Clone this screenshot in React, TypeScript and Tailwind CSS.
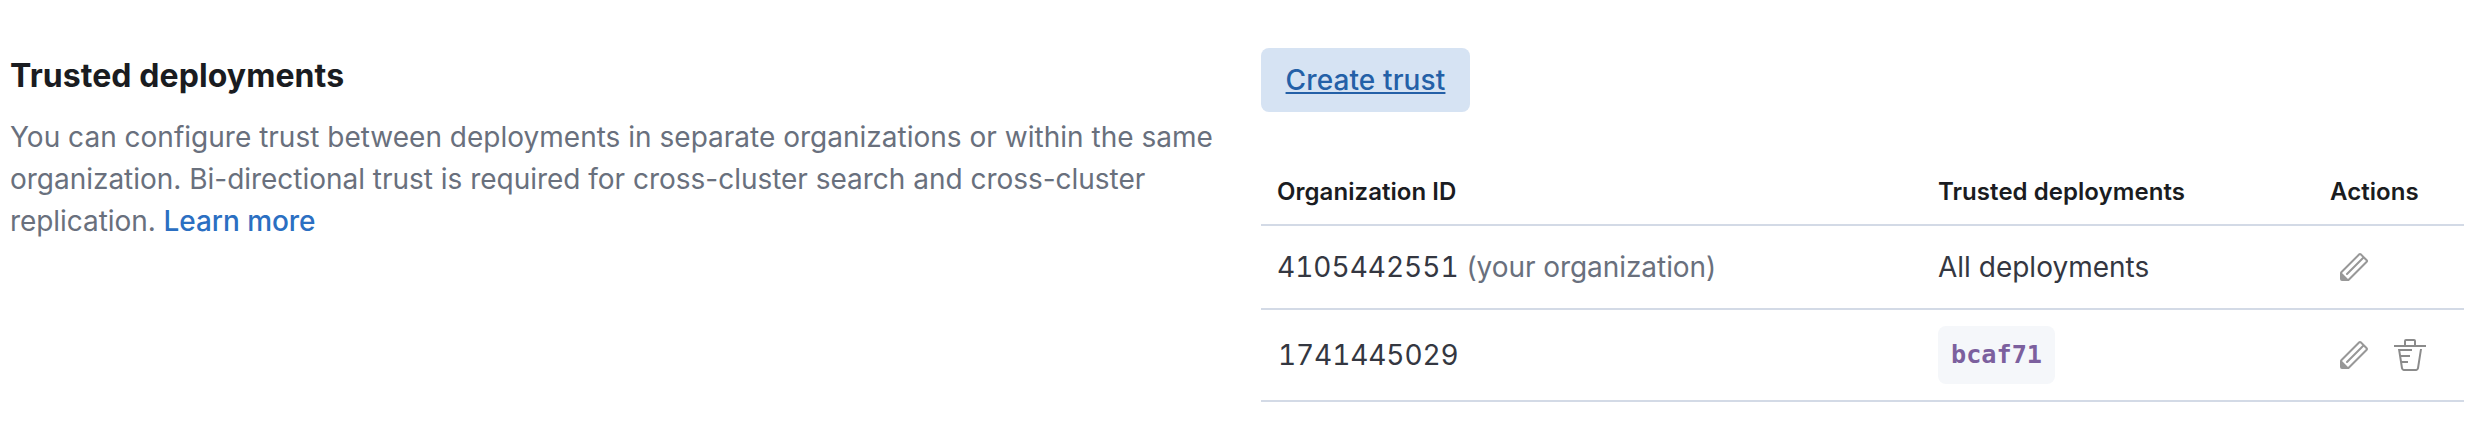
import React from "react";

function PencilIcon() {
  return (
    <svg width="32" height="32" viewBox="0 0 16 16" fill="#989898" aria-hidden="true">
      <path d="M12.148 3.148 11 2l-9 9v3h3l9-9-1.144-1.144-8.002 7.998a.502.502 0 0 1-.708 0 .502.502 0 0 1 0-.708l8.002-7.998ZM11 1c.256 0 .512.098.707.293l3 3a.999.999 0 0 1 0 1.414l-9 9A.997.997 0 0 1 5 15H2a1 1 0 0 1-1-1v-3c0-.265.105-.52.293-.707l9-9A.997.997 0 0 1 11 1ZM5 14H2v-3l3 3Z" />
    </svg>
  );
}

function TrashIcon() {
  return (
    <svg width="32" height="32" viewBox="0 0 16 16" fill="#8b8b8b" aria-hidden="true">
      <path d="M11 3h5v1H0V3h5V1a1 1 0 0 1 1-1h4a1 1 0 0 1 1 1v2Zm-7.056 8H7v1H4.1l.392 2.519c.042.269.254.458.493.458h6.03c.239 0 .451-.189.493-.458l1.498-9.576H14l-1.504 9.73c-.116.747-.74 1.304-1.481 1.304h-6.03c-.741 0-1.365-.557-1.481-1.304l-1.511-9.73H9V5.95H3.157L3.476 8H8v1H3.632l.312 2ZM6 3h4V1H6v2Z" />
    </svg>
  );
}

const row = "grid grid-cols-[661px_392px_1fr] items-center border-b-2 border-[#d3dae6] pl-4";

export default function App() {
  return (
    <main className="flex h-[444px] w-[2486px] items-start overflow-hidden bg-white font-['Inter',sans-serif] text-[28px] leading-[42px] text-[#343741]">
      <section className="w-[1261px] pt-[52px] pl-[10px]">
        <h2 className="text-[32px] leading-[48px] font-bold tracking-[0.08px] whitespace-nowrap text-[#1a1c21]">Trusted deployments</h2>
        <p className="pt-4 whitespace-nowrap text-[#69707d]">
          <span className="tracking-[0.01px]">You can configure trust between deployments in separate organizations or within the same</span>
          <br />
          <span className="tracking-[-0.02px]">organization. Bi-directional trust is required for cross-cluster search and cross-cluster</span>
          <br />
          <span className="tracking-[-0.06px]">
            replication. <a className="font-medium text-[#2b6fc2]">Learn more</a>
          </span>
        </p>
      </section>
      <section className="w-[1203px] pt-12">
        <button className="flex h-16 w-[209px] items-center justify-center rounded-lg bg-[#d6e3f3] font-medium tracking-[0.12px] whitespace-nowrap text-[#2460a7] underline decoration-2 underline-offset-2 [text-decoration-skip-ink:none]">
          Create trust
        </button>
        <div className="pt-11">
          <div className={`${row} h-[70px] pt-[3px] text-[24px] leading-9 font-semibold tracking-[0.05px] text-[#1a1c21]`}>
            <span>Organization ID</span>
            <span>Trusted deployments</span>
            <span>Actions</span>
          </div>
          <div className={`${row} h-[84px]`}>
            <span className="whitespace-nowrap">
              <span className="tabular-nums">4105442551</span> <span className="tracking-[-0.06px] text-[#69707d]">(your organization)</span>
            </span>
            <span>All deployments</span>
            <span className="flex pl-2">
              <PencilIcon />
            </span>
          </div>
          <div className={`${row} h-[92px]`}>
            <span className="pl-px tracking-[-0.1px] tabular-nums">1741445029</span>
            <span className="flex">
              <code className="flex h-[58px] w-[117px] items-center justify-center rounded-lg bg-[#f5f7fa] font-['DejaVu_Sans_Mono',monospace] text-[25.2px] leading-none font-bold text-[#7c609e]">
                bcaf71
              </code>
            </span>
            <span className="flex gap-6 pl-2">
              <PencilIcon />
              <TrashIcon />
            </span>
          </div>
        </div>
      </section>
    </main>
  );
}
